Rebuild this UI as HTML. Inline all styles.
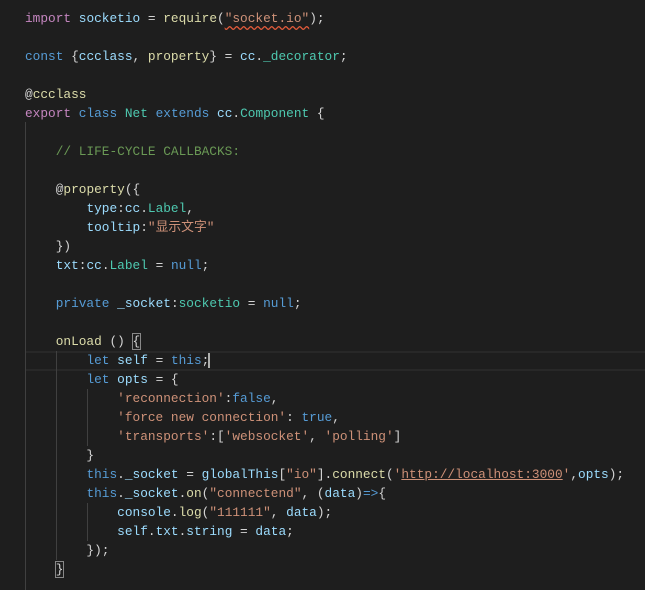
<!DOCTYPE html>
<html><head><meta charset="utf-8"><style>
body{margin:0;background:#1e1e1e;width:645px;height:590px;overflow:hidden;position:relative}
pre{margin:0;position:absolute;left:25px;top:9px;font-family:"Liberation Mono","Noto Sans CJK SC",monospace;font-size:12.8px;line-height:19px;color:#d4d4d4;white-space:pre}
.k{color:#c586c0}.b{color:#569cd6}.v{color:#9cdcfe}.f{color:#dcdcaa}.s{color:#ce9178}.t{color:#4ec9b0}.c{color:#6a9955}.n{color:#b5cea8}
.g{position:absolute;width:1px;background:#404040}
.hl{position:absolute;left:25px;right:0;top:351px;height:16px;border-top:2px solid #282828;border-bottom:2px solid #282828}
.sq{text-decoration:underline wavy #e05a3a;text-underline-offset:3px}
.u{text-decoration:underline}
.br{outline:1px solid #888}
</style></head><body>
<div class="hl"></div>
<div class="g" style="left:25px;top:122px;height:468px"></div>
<div class="g" style="left:56px;top:351px;height:209px"></div>
<div class="g" style="left:87px;top:389px;height:57px"></div>
<div class="g" style="left:87px;top:503px;height:38px"></div>
<pre><span class="k">import</span> <span class="v">socketio</span> = <span class="f">require</span>(<span class="s sq">"socket.io"</span>);

<span class="b">const</span> {<span class="v">ccclass</span>, <span class="f">property</span>} = <span class="v">cc</span>.<span class="t">_decorator</span>;

@<span class="f">ccclass</span>
<span class="k">export</span> <span class="b">class</span> <span class="t">Net</span> <span class="b">extends</span> <span class="v">cc</span>.<span class="t">Component</span> {

    <span class="c">// LIFE-CYCLE CALLBACKS:</span>

    @<span class="f">property</span>({
        <span class="v">type</span>:<span class="v">cc</span>.<span class="t">Label</span>,
        <span class="v">tooltip</span>:<span class="s">"显示文字"</span>
    })
    <span class="v">txt</span>:<span class="v">cc</span>.<span class="t">Label</span> = <span class="b">null</span>;

    <span class="b">private</span> <span class="v">_socket</span>:<span class="t">socketio</span> = <span class="b">null</span>;

    <span class="f">onLoad</span> () <span class="br">{</span>
        <span class="b">let</span> <span class="v">self</span> = <span class="b">this</span>;<span style="border-left:2px solid #aeafad;margin-left:-1px"></span>
        <span class="b">let</span> <span class="v">opts</span> = {
            <span class="s">'reconnection'</span>:<span class="b">false</span>,
            <span class="s">'force new connection'</span>: <span class="b">true</span>,
            <span class="s">'transports'</span>:[<span class="s">'websocket'</span>, <span class="s">'polling'</span>]
        }
        <span class="b">this</span>.<span class="v">_socket</span> = <span class="v">globalThis</span>[<span class="s">"io"</span>].<span class="f">connect</span>(<span class="s">'<span class="u">http://localhost:3000</span>'</span>,<span class="v">opts</span>);
        <span class="b">this</span>.<span class="v">_socket</span>.<span class="f">on</span>(<span class="s">"connectend"</span>, (<span class="v">data</span>)<span class="b">=&gt;</span>{
            <span class="v">console</span>.<span class="f">log</span>(<span class="s">"111111"</span>, <span class="v">data</span>);
            <span class="v">self</span>.<span class="v">txt</span>.<span class="v">string</span> = <span class="v">data</span>;
        });
    <span class="br">}</span></pre>
</body></html>
